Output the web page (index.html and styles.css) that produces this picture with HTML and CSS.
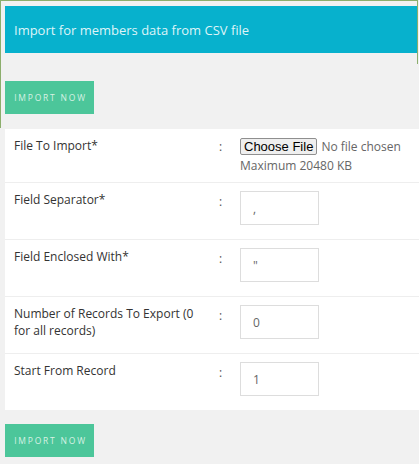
FILE: index.html
```html
<!DOCTYPE html>
<html>
<head>
<meta charset="utf-8">
<link rel="stylesheet" href="styles.css">
</head>
<body>
<div class="frame-top"></div>
<div class="frame-left"></div>
<div class="page">
  <div class="header">Import for members data from CSV file</div>
  <div class="actions top-actions"><button class="btn-import">IMPORT NOW</button></div>
  <div class="panel">
    <div class="row row-file">
      <div class="label">File To Import*</div>
      <div class="colon">:</div>
      <div class="field">
        <input class="file-input" type="file">
        <div class="hint">Maximum 20480 KB</div>
      </div>
    </div>
    <div class="row">
      <div class="label">Field Separator*</div>
      <div class="colon">:</div>
      <div class="field"><input class="text-input" type="text" value=","></div>
    </div>
    <div class="row">
      <div class="label">Field Enclosed With*</div>
      <div class="colon">:</div>
      <div class="field"><input class="text-input" type="text" value="&quot;"></div>
    </div>
    <div class="row">
      <div class="label">Number of Records To Export (0 for all records)</div>
      <div class="colon">:</div>
      <div class="field"><input class="text-input" type="text" value="0"></div>
    </div>
    <div class="row last">
      <div class="label">Start From Record</div>
      <div class="colon">:</div>
      <div class="field"><input class="text-input" type="text" value="1"></div>
    </div>
  </div>
  <div class="actions bottom-actions"><button class="btn-import">IMPORT NOW</button></div>
</div>
</body>
</html>
```

FILE: styles.css
```css
* { box-sizing: border-box; }
html, body { margin: 0; padding: 0; }
body {
  background: #f1f1f1;
  font-family: "Open Sans", "Liberation Sans", sans-serif;
  color: #333;
  width: 419px;
  height: 464px;
  overflow: hidden;
  position: relative;
}
.frame-top {
  position: absolute;
  left: 0;
  top: 0;
  width: 418px;
  height: 64px;
  border-top: 1px solid #8cae6c;
  border-left: 1px solid #8cae6c;
  border-right: 1px solid #8cae6c;
  z-index: 2;
}
.frame-left {
  position: absolute;
  left: 0;
  top: 64px;
  height: 64px;
  border-left: 1px solid #8cae6c;
  z-index: 2;
}
.page {
  padding: 6px 0 0 5px;
}
.header {
  background: #07b1cd;
  height: 47px;
  margin-right: 2px;
  display: flex;
  align-items: center;
  padding-left: 9px;
  padding-top: 1px;
  color: #def4f8;
  font-size: 13px;
}
.actions { display: flex; }
.top-actions { padding: 28px 0 15px; }
.bottom-actions { padding: 14px 0 0; }
.btn-import {
  background: #4cc69a;
  border: none;
  width: 89px;
  height: 33px;
  padding: 0 0 0 2px;
  color: #d8f1e4;
  font-family: "Open Sans", "Liberation Sans", sans-serif;
  font-size: 8.5px;
  letter-spacing: 1.8px;
  text-align: center;
}
.panel {
  background: #fff;
  padding-top: 3px;
}
.row {
  display: grid;
  grid-template-columns: 190px 36px 1fr;
  padding-left: 9px;
  border-bottom: 1px solid #eeeeee;
  min-height: 57px;
}
.row.last { border-bottom: none; min-height: 56px; }
.row-file { min-height: 51px; }
.label {
  font-size: 12px;
  line-height: 17px;
  padding-top: 8px;
  color: #333;
}
.row-file .label { padding-top: 5px; }
.colon {
  font-size: 12px;
  line-height: 17px;
  padding-top: 10px;
  padding-left: 15px;
  color: #555;
}
.row-file .colon { padding-top: 6px; }
.field { padding-top: 8px; }
.row-file .field { padding-top: 6px; }
.file-input {
  font-family: "Open Sans", "Liberation Sans", sans-serif;
  font-size: 12px;
  color: #666;
  width: 175px;
  height: 17px;
  line-height: 17px;
  display: block;
}
.file-input::file-selector-button {
  font-family: "Liberation Sans", Arial, sans-serif;
  font-size: 13px;
  color: #000;
  padding: 0 3px;
  height: 17px;
  line-height: 15px;
  margin-right: 4px;
  border: 1px solid #8f8f8f;
  border-radius: 2px;
  background: #efefef;
}
.hint {
  font-size: 12px;
  line-height: 17px;
  color: #666;
  margin-top: 2px;
}
.text-input {
  width: 79px;
  height: 34px;
  border: 1px solid #dddddd;
  padding: 0 12px;
  font-family: "Open Sans", "Liberation Sans", sans-serif;
  font-size: 12px;
  color: #666;
  outline: none;
  background: #fff;
}
```
